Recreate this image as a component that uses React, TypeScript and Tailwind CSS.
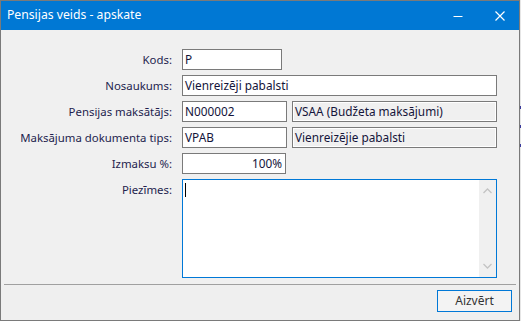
const font = { fontFamily: '"Noto Sans", "Open Sans", sans-serif' };

function Field({ w, value, readOnly, right }: { w: string; value: string; readOnly?: boolean; right?: boolean }) {
  return (
    <div
      className={`${w} h-[21px] border border-[#7a7a7a] flex items-center px-[2px] text-[11.8px] text-[#14143a] ${
        readOnly ? "bg-[#f0f0f0] shadow-[inset_-1px_-1px_0_#ffffff,inset_1px_1px_0_#ffffff]" : "bg-white"
      } ${right ? "justify-end pr-[3px]" : ""}`}
    >
      <span className="whitespace-nowrap leading-none">{value}</span>
    </div>
  );
}

function Row({ label, children, top }: { label: string; children: React.ReactNode; top?: boolean }) {
  return (
    <div className={`flex ${top ? "items-start" : "items-center"}`}>
      <div className="w-[171px] h-[21px] flex items-center justify-end text-[11.4px] text-[#1e1e4e] whitespace-nowrap">
        {label}
      </div>
      <div className="ml-[10px] flex gap-[5px]">{children}</div>
    </div>
  );
}

export default function App() {
  return (
    <div className="w-[521px] h-[321px] flex bg-white overflow-hidden" style={font}>
      <div className="w-[520px] h-[321px] border border-[#7a7a7a] flex flex-col bg-[#f0f0f0]">
        {/* title bar */}
        <div className="h-[29px] bg-[#0078d4] flex items-center text-white">
          <span className="pl-[6px] text-[12.2px]">Pensijas veids - apskate</span>
          <div className="flex-1" />
          <div className="w-[46px] h-full flex items-center justify-center">
            <svg width="10" height="10" viewBox="0 0 10 10">
              <path d="M0.5 5.5H9.5" stroke="white" strokeWidth="1" />
            </svg>
          </div>
          <div className="w-[38px] h-full flex items-center justify-center">
            <svg width="10" height="10" viewBox="0 0 10 10">
              <path d="M0.5 0.5L9.5 9.5M9.5 0.5L0.5 9.5" stroke="white" strokeWidth="1.2" />
            </svg>
          </div>
        </div>

        {/* form */}
        <div className="flex-1 flex flex-col gap-[5px] pt-[19px]">
          <Row label="Kods:">
            <Field w="w-[100px]" value="P" />
          </Row>
          <Row label="Nosaukums:">
            <Field w="w-[315px]" value="Vienreizēji pabalsti" />
          </Row>
          <Row label="Pensijas maksātājs:">
            <Field w="w-[105px]" value="N000002" />
            <Field w="w-[205px]" value="VSAA (Budžeta maksājumi)" readOnly />
          </Row>
          <Row label="Maksājuma dokumenta tips:">
            <Field w="w-[105px]" value="VPAB" />
            <Field w="w-[205px]" value="Vienreizējie pabalsti" readOnly />
          </Row>
          <Row label="Izmaksu %:">
            <Field w="w-[104px]" value="100%" right />
          </Row>
          <Row label="Piezīmes:" top>
            <div className="w-[315px] h-[99px] border border-[#0078d7] bg-white flex">
              <div className="flex-1 pl-[2px] pt-[3px]">
                <div className="w-[1px] h-[14px] bg-black" />
              </div>
              <div className="w-[17px] bg-[#f0f0f0] flex flex-col items-center justify-between py-[8px]">
                <svg width="9" height="6" viewBox="0 0 9 6">
                  <path d="M0.5 5L4.5 1L8.5 5" stroke="#c4c4c4" strokeWidth="1.3" fill="none" />
                </svg>
                <svg width="9" height="6" viewBox="0 0 9 6">
                  <path d="M0.5 1L4.5 5L8.5 1" stroke="#c4c4c4" strokeWidth="1.3" fill="none" />
                </svg>
              </div>
            </div>
          </Row>
        </div>

        {/* footer */}
        <div className="mx-[3px] h-[1px] bg-[#a0a0a0]" />
        <div className="h-[35px] bg-[#efefef] flex items-start justify-end pt-[5px] pr-[7px]">
          <div className="w-[75px] h-[22px] border border-[#0078d7] bg-[#f3f3f3] flex items-center justify-center text-[12px] text-[#333333]">
            Aizvērt
          </div>
        </div>
      </div>
      {/* sliver of the window behind */}
      <div className="w-[1px] h-full bg-[#e6e6e6] flex flex-col pt-[106px] gap-[16px]">
        <div className="h-[3px] bg-[#3b3b9b]" />
        <div className="h-[3px] bg-[#3b3b9b]" />
        <div className="h-[3px] bg-[#3b3b9b]" />
      </div>
    </div>
  );
}
